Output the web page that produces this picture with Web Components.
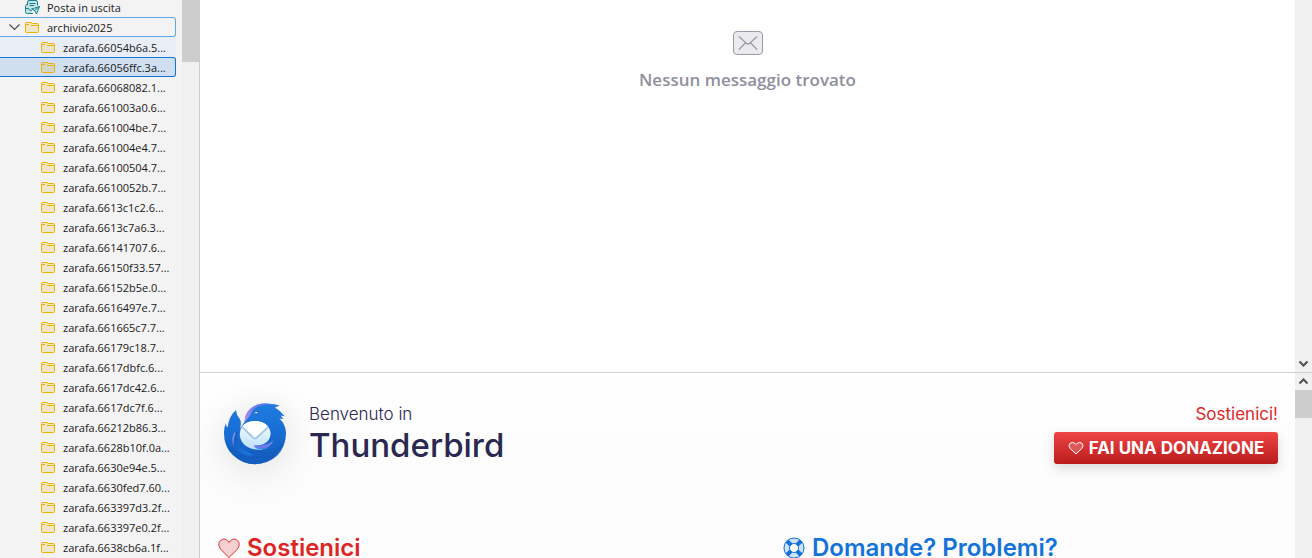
<!DOCTYPE html>
<html lang="it">
<head>
<meta charset="utf-8">
<title>Thunderbird</title>
<style>
  html, body {
    height: 100%;
    margin: 0;
  }

  body {
    background: #FFFFFF;
    font-family: "Open Sans", "Noto Sans", sans-serif;
    overflow: hidden;
  }
</style>
</head>
<body>
<mail-app></mail-app>

<script>
const createTemplate = (html) => {
  const template = document.createElement('template');
  template.innerHTML = html;
  return template;
};

class BaseElement extends HTMLElement {
  constructor() {
    super();

    this._shadow = this.attachShadow({ mode: 'open' });
    this._shadow.appendChild(this.constructor.markup().content.cloneNode(true));
  }
}

const ICONS = {
  folder: `
    <svg viewBox="0 0 16 16" width="16" height="16" fill="none" stroke="#EAB308">
      <path d="M1.5 4.5 Q1.5 3.5 2.5 3.5 H7 L8.5 4.5 H13.5 Q14.5 4.5 14.5 5.5 V12.5 Q14.5 13.5 13.5 13.5 H2.5 Q1.5 13.5 1.5 12.5 Z" fill="#EAB308" fill-opacity=".18"/>
      <path d="M2 5.5 H5 M7 6.5 H14"/>
    </svg>`,
  outbox: `
    <svg viewBox="0 0 16 16" width="16" height="16" fill="none" stroke="#0D8490">
      <path d="M3.5 6 V3 Q3.5 1.5 5 1.5 H12 Q13.5 1.5 13.5 3 V7 L8 9 V14.5 H3.5 Q1.5 14.5 1.5 12.5 V8 Q1.5 6.5 3.5 6 Z" fill="#0D9488" fill-opacity=".2" stroke="none"/>
      <path d="M3.5 6 V3 Q3.5 1.5 5 1.5 H12 Q13.5 1.5 13.5 3 V6.5 M3 5 Q1.5 6 1.5 8 V12.5 Q1.5 14.5 3.5 14.5 H9"/>
      <path d="M5.5 4.5 H11.5 M5.5 6.5 H10 M1.5 9.5 H4.5 Q5 11.5 7.5 11.5"/>
      <path d="M15.5 7.5 L7.5 10 L10.5 11.5 L12.5 15 Z M15.5 7.5 L10.5 11.5" fill="#CDE8EA" stroke-linejoin="round"/>
    </svg>`
};

class FolderRow extends BaseElement {
  static markup() {
    return createTemplate(`
      <style>
        :host {
          align-items: center;
          border: 1px solid transparent;
          border-left: 0;
          border-radius: 0 3px 3px 0;
          box-sizing: border-box;
          color: #1A1A1A;
          display: flex;
          font-size: 11px;
          height: 20px;
          line-height: 14px;
          padding-left: 40px;
          white-space: nowrap;
        }

        :host([level="1"]) {
          padding-left: 24px;
        }

        :host([open]) {
          border-color: #62A8E5;
          padding-left: 8px;
        }

        :host([hovered]) {
          background: #E9EEF6;
        }

        :host([selected]) {
          background: #CFDFEF;
          border-color: #1373D9;
        }

        .Icon {
          flex: none;
          height: 16px;
          margin-right: 7px;
          width: 16px;
        }

        .Icon svg {
          display: block;
        }

        .Label {
          padding-top: 1px;
        }

        .Twisty {
          background: none;
          border: 0;
          display: none;
          height: 16px;
          padding: 0;
          width: 16px;
        }

        :host([open]) .Twisty {
          display: block;
        }
      </style>

      <button class="Twisty" aria-label="Comprimi">
        <svg viewBox="0 0 16 16" width="16" height="16">
          <path d="M1.5 5.5 L6.5 10.5 L11.5 5.5" fill="none" stroke="#4A4A4F" stroke-width="1.2"/>
        </svg>
      </button>
      <span class="Icon"></span>
      <span class="Label"><slot></slot></span>
    `);
  }

  connectedCallback() {
    this.setAttribute('role', 'treeitem');
    this._shadow.querySelector('.Icon').innerHTML = ICONS[this.getAttribute('icon') || 'folder'];
  }
}

class ScrollTrack extends BaseElement {
  static markup() {
    return createTemplate(`
      <style>
        :host {
          background: #F0F0F0;
          box-sizing: border-box;
          display: flex;
          flex: none;
          flex-direction: column;
          width: 17px;
        }

        .Thumb {
          background: #CDCDCD;
          display: none;
          height: var(--thumb-size, 28px);
        }

        :host([thumb]) .Thumb {
          display: block;
        }

        svg {
          display: none;
          flex: none;
        }

        :host([arrow="up"]) .Up,
        :host([arrow="down"]) .Down {
          display: block;
        }

        .Down {
          margin-top: auto;
        }
      </style>

      <svg class="Up" viewBox="0 0 17 17" width="17" height="17">
        <path d="M4.5 10.5 L8.5 6.5 L12.5 10.5" fill="none" stroke="#505050" stroke-width="2"/>
      </svg>
      <div class="Thumb"></div>
      <svg class="Down" viewBox="0 0 17 17" width="17" height="17">
        <path d="M4.5 6.5 L8.5 10.5 L12.5 6.5" fill="none" stroke="#505050" stroke-width="2"/>
      </svg>
    `);
  }
}

class FolderPane extends BaseElement {
  static markup() {
    return createTemplate(`
      <style>
        :host {
          background: #F3F3F3;
          border-right: 1px solid #CCCCCC;
          box-sizing: border-box;
          display: flex;
          flex: none;
          overflow: hidden;
          width: 200px;
        }

        .Tree {
          flex: 1;
          margin: -3px 6px 0 0;
          min-width: 0;
        }

        scroll-track {
          --thumb-size: 62px;
        }
      </style>

      <div class="Tree" role="tree" aria-label="Cartelle">
        <folder-row level="1" icon="outbox">Posta in uscita</folder-row>
        <folder-row level="1" open>archivio2025</folder-row>
      </div>
      <scroll-track thumb></scroll-track>
    `);
  }

  connectedCallback() {
    const $tree = this._shadow.querySelector('.Tree');

    const folders = [
      '66054b6a.5', '66056ffc.3a', '66068082.1', '661003a0.6', '661004be.7',
      '661004e4.7', '66100504.7', '6610052b.7', '6613c1c2.6', '6613c7a6.3',
      '66141707.6', '66150f33.57', '66152b5e.0', '6616497e.7', '661665c7.7',
      '66179c18.7', '6617dbfc.6', '6617dc42.6', '6617dc7f.6', '66212b86.3',
      '6628b10f.0a', '6630e94e.5', '6630fed7.60', '663397d3.2f', '663397e0.2f',
      '6638cb6a.1f'
    ];

    folders.forEach((name, index) => {
      const $row = document.createElement('folder-row');

      $row.textContent = `zarafa.${name}...`;
      $row.toggleAttribute('hovered', index === 0);
      $row.toggleAttribute('selected', index === 1);
      $tree.appendChild($row);
    });
  }
}

class MessageList extends BaseElement {
  static markup() {
    return createTemplate(`
      <style>
        :host {
          display: flex;
          min-height: 0;
        }

        .Empty {
          align-items: center;
          color: #8F8F9D;
          display: flex;
          flex: 1;
          flex-direction: column;
          padding-top: 28px;
        }

        p {
          font-size: 17px;
          font-weight: 600;
          line-height: 24px;
          margin: 10px 0 0;
        }
      </style>

      <div class="Empty">
        <svg viewBox="0 0 32 30" width="32" height="30" fill="none" stroke="#9A9AA8">
          <rect x="1.5" y="3.5" width="29" height="23" rx="3.5" fill="#EBEBED"/>
          <path d="M7 8.5 L14 15 Q16 17 18 15 L25 8.5 M7 21.5 L13.5 14.8 M25 21.5 L18.5 14.8" stroke-width="1.3"/>
        </svg>
        <p>Nessun messaggio trovato</p>
      </div>
      <scroll-track arrow="down"></scroll-track>
    `);
  }
}

class BirdLogo extends BaseElement {
  static markup() {
    return createTemplate(`
      <style>
        :host {
          display: block;
          filter: drop-shadow(0 4px 18px rgba(0, 0, 0, .12));
          height: 64px;
          width: 64px;
        }

        svg {
          display: block;
        }
      </style>

      <svg viewBox="24 14 192 192" width="64" height="64">
        <defs>
          <linearGradient id="body" x1="0" y1="0" x2="0" y2="1">
            <stop offset="0" stop-color="#1F7DE0"/>
            <stop offset=".5" stop-color="#176CD3"/>
            <stop offset="1" stop-color="#1259B8"/>
          </linearGradient>
          <linearGradient id="wing" x1="0" y1="0" x2="1" y2="1">
            <stop offset="0" stop-color="#1458B8"/>
            <stop offset="1" stop-color="#1D78DE"/>
          </linearGradient>
          <linearGradient id="mail" x1="0" y1="0" x2="0" y2="1">
            <stop offset="0" stop-color="#FFFFFF"/>
            <stop offset="1" stop-color="#B9DEFA"/>
          </linearGradient>
          <linearGradient id="crown" x1="0" y1="1" x2="1" y2="0">
            <stop offset="0" stop-color="#B58AF0"/>
            <stop offset="1" stop-color="#4B74E2"/>
          </linearGradient>
        </defs>
        <path d="M27 112 Q26 94 33 80 Q33 91 38 93 Q41 61 63 41 Q64 56 73 66 Q81 77 75 97 L89 76 Q91 38 126 25 Q152 17 193 27 Q187 33 179 34 Q191 37 209 60 Q202 60 198 57 Q198 61 205 68 Q197 68 193 66 Q213 86 213 111 A93 92 0 0 1 27 112 Z" fill="url(#body)"/>
        <path d="M88 78 Q90 39 126 25 Q153 17 190 27 Q153 23 130 30 Q113 37 106 56 Q98 68 88 78 Z" fill="url(#crown)"/>
        <path d="M28 121 Q36 158 77 173 Q125 190 166 169 Q199 153 211 124 Q205 186 141 201 Q94 211 57 179 Q31 157 28 121 Z" fill="#125DBE" opacity=".6"/>
        <path d="M58 106 Q42 134 63 160 Q84 180 116 177 Q76 157 67 137 Q63 122 66 108 Z" fill="url(#wing)"/>
        <path d="M60 104 Q44 128 58 152 Q53 132 62 112 Z" fill="#6B8BEC"/>
        <path d="M75 108 Q79 76 119 74 Q162 75 167 111 Q166 135 145 144 Q129 149 120 147 Q129 157 144 160 Q89 164 76 126 Q73 116 75 108 Z" fill="url(#mail)"/>
        <path d="M81 92 L115 125 Q120 129 125 125 L160 92" fill="none" stroke="#91BCE5" stroke-width="4"/>
        <path d="M84 88 L117 120 Q120 123 123 120 L156 88 Q145 75 120 75 Q95 75 84 88 Z" fill="#FFFFFF"/>
        <path d="M116 147 Q149 152 176 132 Q168 158 132 159 Q119 156 116 147 Z" fill="#6C7BE7"/>
        <path d="M120 151 Q140 159 163 154 Q148 161 132 159 Z" fill="#3C91EF"/>
        <path d="M116 50 Q124 43 131 48 Q126 54 118 52 Z" fill="#F5FBFF" stroke="#1054AC" stroke-width="2"/>
      </svg>
    `);
  }
}

class DonateLink extends BaseElement {
  static markup() {
    return createTemplate(`
      <style>
        :host {
          display: block;
        }

        a {
          align-items: center;
          background: linear-gradient(#EF4444, #B91C1C);
          border-radius: 3px;
          box-shadow: 0 4px 12px rgba(0, 0, 0, .14);
          box-sizing: border-box;
          color: #FFFFFF;
          display: flex;
          font-family: Inter, sans-serif;
          font-size: 17px;
          font-weight: 700;
          gap: 5px;
          height: 32px;
          justify-content: center;
          min-width: 224px;
          padding: 0 12px;
          text-decoration: none;
          text-transform: uppercase;
        }
      </style>

      <a href="#dona">
        <svg viewBox="0 0 16 16" width="16" height="16">
          <path d="M8 14 L1.9 8.2 Q0 5.6 1.9 3.4 Q4.5 1.3 7 3.4 L8 4.6 L9 3.4 Q11.5 1.3 14.1 3.4 Q16 5.6 14.1 8.2 Z" fill="#FFFFFF" fill-opacity=".2" stroke="#FFFFFF" stroke-linejoin="round"/>
        </svg>
        <slot></slot>
      </a>
    `);
  }
}

class SectionTitle extends BaseElement {
  static markup() {
    return createTemplate(`
      <style>
        :host {
          color: #DC2626;
          display: block;
        }

        :host([kind="help"]) {
          color: #1373D9;
        }

        h2 {
          align-items: center;
          display: flex;
          font-family: Inter, sans-serif;
          font-size: 24px;
          font-weight: 600;
          gap: 7px;
          line-height: 24px;
          margin: 0;
          white-space: nowrap;
        }
      </style>

      <h2><slot name="icon"></slot><slot></slot></h2>
    `);
  }
}

class StartPage extends BaseElement {
  static markup() {
    return createTemplate(`
      <style>
        :host {
          border-top: 1px solid #CFCFCF;
          box-sizing: border-box;
          display: flex;
          min-height: 0;
          overflow: hidden;
        }

        .Page {
          background: linear-gradient(#FFFFFF, #FCFCFC 60%);
          flex: 1;
          min-width: 0;
          padding: 28px 17px 0 18px;
        }

        .Header {
          align-items: flex-start;
          display: flex;
          padding-left: 5px;
        }

        .Welcome {
          color: #2A2850;
          flex: 1;
          font-family: Inter, sans-serif;
          padding-left: 22px;
        }

        .Welcome p {
          font-size: 17px;
          font-weight: 300;
          line-height: 26px;
          margin: 0;
        }

        h1 {
          font-size: 33px;
          font-weight: 500;
          line-height: 36px;
          margin: 0;
        }

        .Support {
          align-items: flex-end;
          display: flex;
          flex-direction: column;
        }

        .Support p {
          color: #DC2626;
          font-family: Inter, sans-serif;
          font-size: 17px;
          line-height: 26px;
          margin: 0 0 5px;
        }

        .Sections {
          display: grid;
          gap: 70px;
          grid-template-columns: 1fr 1fr;
          margin-top: 71px;
        }
      </style>

      <div class="Page">
        <header class="Header">
          <bird-logo></bird-logo>
          <div class="Welcome">
            <p>Benvenuto in</p>
            <h1>Thunderbird</h1>
          </div>
          <div class="Support">
            <p>Sostienici!</p>
            <donate-link>Fai una donazione</donate-link>
          </div>
        </header>
        <div class="Sections">
          <section-title>
            <svg slot="icon" viewBox="0 0 24 24" width="22" height="22">
              <path d="M12 22.5 L3 13.5 Q-1 8 2.5 4 Q6.5 .5 10.5 4 L12 6 L13.5 4 Q17.5 .5 21.5 4 Q25 8 21 13.5 Z" fill="#F5D0D2" stroke="#DC2626"/>
            </svg>
            Sostienici
          </section-title>
          <section-title kind="help">
            <svg slot="icon" viewBox="1 1 22 22" width="22" height="22" fill="none" stroke="#1373D9">
              <circle cx="12" cy="12" r="7.5" stroke="#D0E3F7" stroke-width="6"/>
              <path d="M5 5 L9 9 M19 5 L15 9 M5 19 L9 15 M19 19 L15 15" stroke-width="4"/>
              <circle cx="12" cy="12" r="10"/>
              <circle cx="12" cy="12" r="4.5"/>
            </svg>
            Domande? Problemi?
          </section-title>
        </div>
      </div>
      <scroll-track arrow="up" thumb></scroll-track>
    `);
  }
}

class MailApp extends BaseElement {
  static markup() {
    return createTemplate(`
      <style>
        :host {
          display: flex;
          height: 100vh;
          overflow: hidden;
        }

        main {
          display: grid;
          flex: 1;
          grid-template-rows: minmax(0, 2fr) minmax(0, 1fr);
          min-width: 0;
        }
      </style>

      <folder-pane></folder-pane>
      <main>
        <message-list></message-list>
        <start-page></start-page>
      </main>
    `);
  }
}

customElements.define('folder-row', FolderRow);
customElements.define('scroll-track', ScrollTrack);
customElements.define('folder-pane', FolderPane);
customElements.define('message-list', MessageList);
customElements.define('bird-logo', BirdLogo);
customElements.define('donate-link', DonateLink);
customElements.define('section-title', SectionTitle);
customElements.define('start-page', StartPage);
customElements.define('mail-app', MailApp);
</script>
</body>
</html>
